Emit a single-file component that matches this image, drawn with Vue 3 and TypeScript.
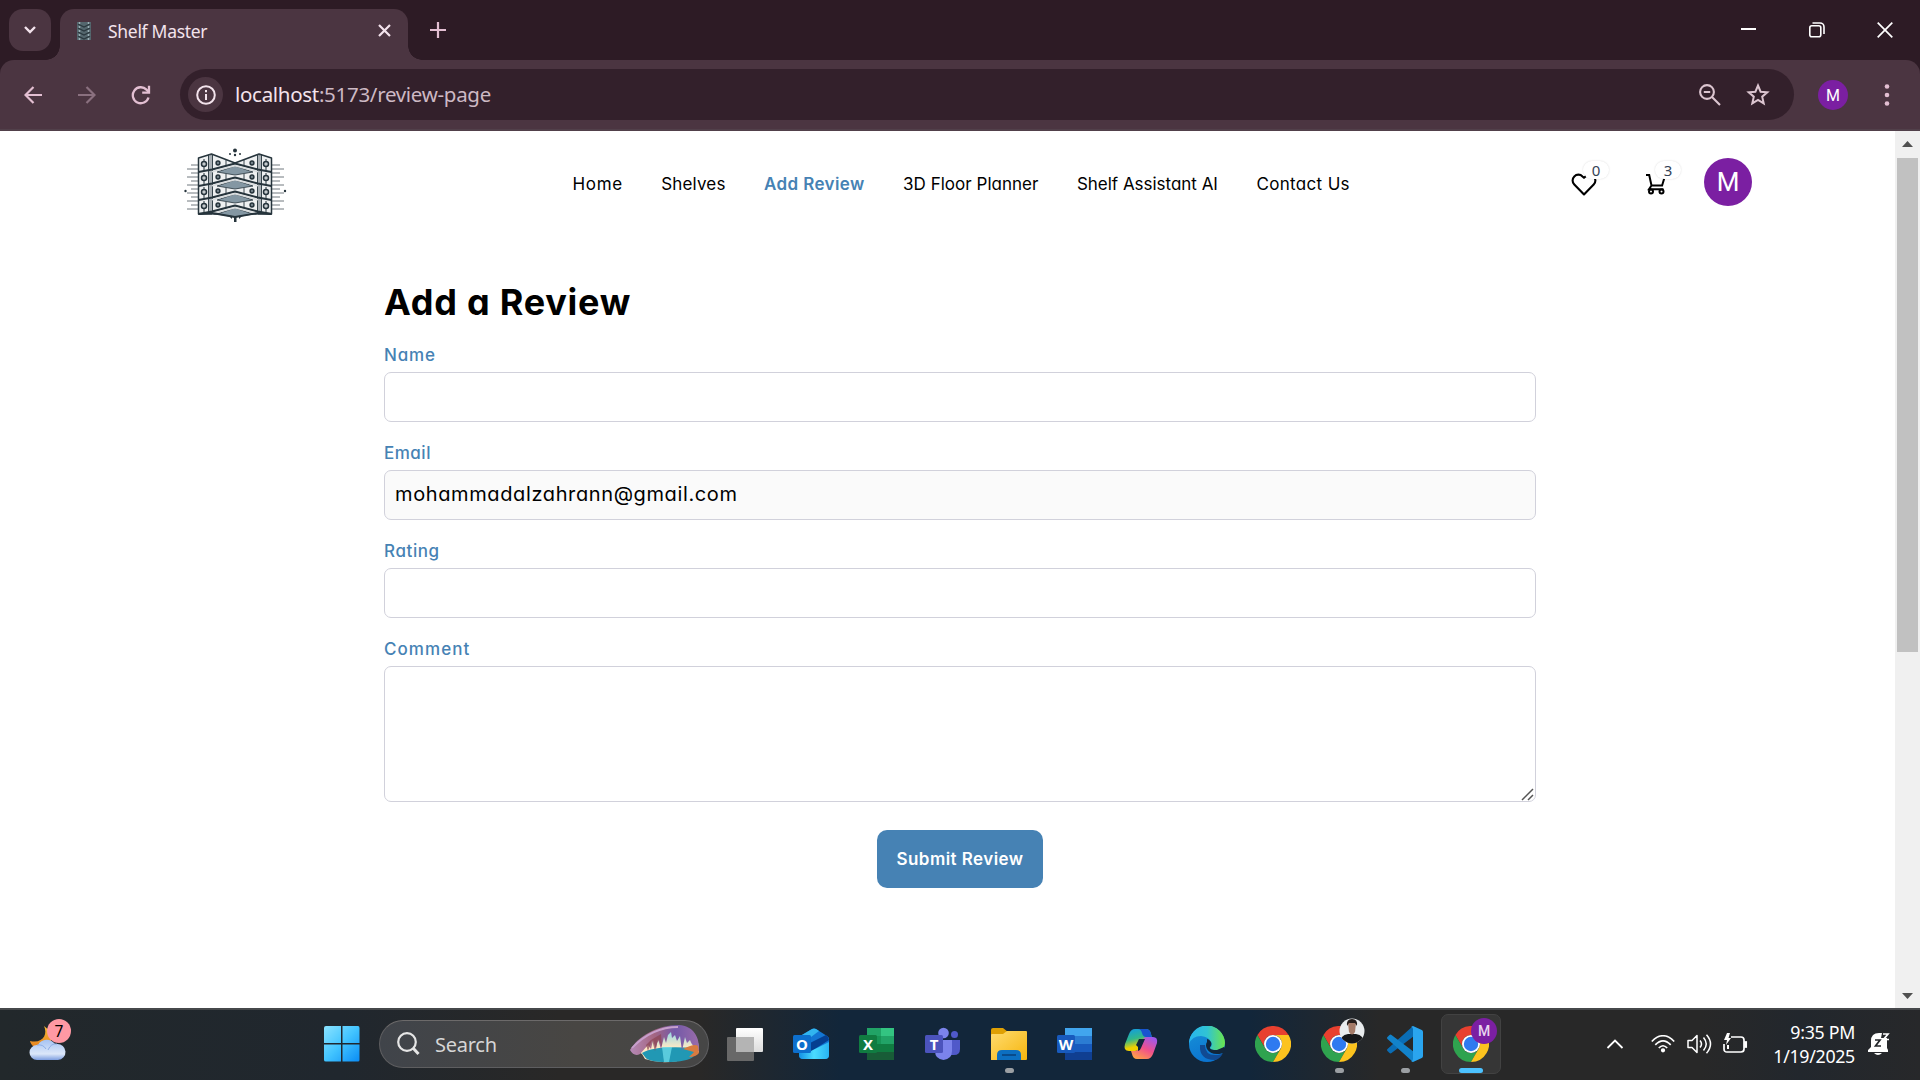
<script setup lang="ts">
interface NavItem { label: string; active?: boolean; spacing: string }
interface Field { label: string; value: string; readonly?: boolean; spacing: string }

const nav: NavItem[] = [
  { label: 'Home', spacing: '0.65px' },
  { label: 'Shelves', spacing: '0.16px' },
  { label: 'Add Review', active: true, spacing: '0.38px' },
  { label: '3D Floor Planner', spacing: '0.02px' },
  { label: 'Shelf Assistant AI', spacing: '-0.02px' },
  { label: 'Contact Us', spacing: '0.34px' },
]
const fields: Field[] = [
  { label: 'Name', value: '', spacing: '0.85px' },
  { label: 'Email', value: 'mohammadalzahrann@gmail.com', readonly: true, spacing: '0.5px' },
  { label: 'Rating', value: '', spacing: '0.6px' },
]
const shelfRows = [0, 14, 28, 42]
const sideLines = [0, 4, 8, 12, 16, 20, 24, 28, 32, 36, 40, 44]
</script>

<template>
  <div class="screen">
    <header class="titlebar">
      <div class="tab-search">
        <svg width="14" height="10" viewBox="0 0 14 10"><path d="M2 2l5 5 5-5" fill="none" stroke="#f3e3ec" stroke-width="2.4" /></svg>
      </div>
      <div class="tab">
        <svg class="favicon" width="14" height="20" viewBox="0 0 14 20">
          <rect x="0" y="1" width="14" height="18" fill="#54666d" />
          <path d="M1 3l6 3 6-3M1 7l6 3 6-3M1 11l6 3 6-3M1 15l6 3 6-3" stroke="#2b383e" stroke-width="1.300" fill="none" />
          <path d="M2.500 1v18M11.500 1v18" stroke="#9ab0b6" stroke-width="1.500" stroke-dasharray="2 2" />
        </svg>
        <span class="tab-title">Shelf Master</span>
        <svg class="tab-close" width="13" height="13" viewBox="0 0 13 13"><path d="M1 1l11 11M12 1L1 12" stroke="#f3e3ec" stroke-width="2.2" /></svg>
      </div>
      <svg class="plus" width="16" height="16" viewBox="0 0 16 16"><path d="M8 0v16M0 8h16" stroke="#e3bfd2" stroke-width="2.2" /></svg>
      <div class="window-controls">
        <svg width="16" height="16" viewBox="0 0 16 16"><path d="M0 7h15" stroke="#fff" stroke-width="2" /></svg>
        <svg width="16" height="16" viewBox="0 0 16 16" fill="none" stroke="#fff" stroke-width="1.600"><rect x=".8" y="3.800" width="11" height="11" rx="2" /><path d="M3.500 1h7.500a4 4 0 0 1 4 4v7" /></svg>
        <svg width="16" height="16" viewBox="0 0 16 16"><path d="M.7.7l14.600 14.600M15.300.7L.7 15.300" stroke="#fff" stroke-width="1.700" /></svg>
      </div>
    </header>

    <div class="toolbar">
      <svg class="back" width="18" height="18" viewBox="0 0 18 18" fill="none" stroke="#e3bfd2" stroke-width="2.200"><path d="M18 9H1.500M9.500 1L1.500 9l8 8" /></svg>
      <svg class="forward" width="18" height="18" viewBox="0 0 18 18" fill="none" stroke="#8a707f" stroke-width="2.200"><path d="M0 9h16.500M8.500 1l8 8-8 8" /></svg>
      <svg class="reload" width="20" height="20" viewBox="0 0 20 20" fill="none" stroke="#e3bfd2" stroke-width="2.300"><path d="M17.500 12.500A8 8 0 1 1 15.500 4.600L18 7.200" /><path d="M18 .8v6.800h-6.800" /></svg>
      <div class="omnibox">
        <span class="site-info">
          <svg width="20" height="20" viewBox="0 0 20 20"><circle cx="10" cy="10" r="8.800" fill="none" stroke="#f3e3ec" stroke-width="2" /><path d="M10 9v6M10 5v2.200" stroke="#f3e3ec" stroke-width="2" /></svg>
        </span>
        <span class="url"><b>localhost</b>:5173/review-page</span>
        <svg class="zoom" width="22" height="22" viewBox="0 0 22 22" fill="none" stroke="#dcc5d0" stroke-width="2.100"><circle cx="8" cy="8" r="6.900" /><path d="M13 13l8 8M4.800 8h6.400" /></svg>
        <svg class="star" width="24" height="23" viewBox="0 0 24 23" fill="none" stroke="#dcc5d0" stroke-width="2"><path d="M12 2.500l2.600 6.200 6.700.6-5.100 4.400 1.500 6.600-5.700-3.500-5.700 3.500 1.500-6.600-5.100-4.400 6.700-.6z" /></svg>
      </div>
      <span class="profile">M</span>
      <svg class="menu" width="6" height="24" viewBox="0 0 6 24" fill="#e3bfd2"><circle cx="3" cy="3.500" r="2.300" /><circle cx="3" cy="12" r="2.300" /><circle cx="3" cy="20.500" r="2.300" /></svg>
    </div>

    <div class="viewport">
      <div class="page">
        <div class="site-header">
          <svg class="logo" width="104" height="76" viewBox="0 0 104 76">
            <g stroke="#4b575e" stroke-width=".8">
              <path v-for="(y, i) in sideLines" :key="y" :d="`M${i % 2 ? 3 : 7} ${18 + y}H15M88 ${18 + y}h${i % 2 ? 12 : 8}`" />
            </g>
            <g fill="#26343c">
              <circle cx="51" cy="3.500" r="2" /><circle cx="46" cy="7" r="1" /><circle cx="51" cy="8" r="1.200" /><circle cx="56" cy="7" r="1" />
              <circle cx="1.500" cy="44" r="1.200" /><circle cx="101" cy="44" r="1.200" />
              <path d="M45 69h3v3zM50 69h2.500v6H50zM55 69h3l-3 3z" />
            </g>
            <g stroke="#26343c" stroke-width="1.500" stroke-linejoin="round">
              <path d="M14.500 11l13-4 23.500 9 24-9 12.500 4v56h-73z" fill="#eef0f1" />
              <path d="M24.500 8v58h4V7.500zM73.500 7.500V66h4V8z" fill="#aab1b6" stroke-width=".9" />
              <g v-for="y in shelfRows" :key="y">
                <path :d="`M33 ${25 + y}L51 ${19 + y}L69 ${25 + y}L51 ${28 + y}Z`" fill="#8497a3" stroke-width=".8" />
                <path :d="`M14.500 ${25 + y}L28 ${22.500 + y}L51 ${16.500 + y}L74 ${22.500 + y}L87.500 ${25 + y}`" fill="none" stroke-width="1.900" />
                <path :d="`M28 ${24.800 + y}L51 ${18.800 + y}L74 ${24.800 + y}`" fill="none" stroke="#d8dcde" stroke-width="1.400" />
                <path :d="`M42 ${13 + y}v5M60 ${13 + y}v5`" stroke-width=".9" />
                <circle cx="20" :cy="17 + y" r="2.500" fill="#c4cacd" />
                <circle cx="82" :cy="17 + y" r="2.500" fill="#c4cacd" />
                <circle cx="34" :cy="16 + y" r="1.900" fill="#78868e" />
                <circle cx="68" :cy="16 + y" r="1.900" fill="#78868e" />
                <path :d="`M20 ${12 + y}v2.500M20 ${19.500 + y}v4M82 ${12 + y}v2.500M82 ${19.500 + y}v4`" stroke-width="1" />
              </g>
              <path d="M14.500 67l13.500-1 23 4 23-4 13.500 1" fill="none" stroke-width="1.900" />
            </g>
          </svg>
          <nav class="nav">
            <a v-for="n in nav" :key="n.label" :class="{ active: n.active }" :style="{ letterSpacing: n.spacing }">{{ n.label }}</a>
          </nav>
          <div class="actions">
            <div class="action heart">
              <svg width="26" height="24" viewBox="0 0 26 24"><path d="M13 21.500L3.300 11.600a5.800 5.800 0 0 1 0-8.200 5.700 5.700 0 0 1 8.200 0L13 4.800l1.500-1.400a5.700 5.700 0 0 1 8.200 0 5.800 5.800 0 0 1 0 8.200z" fill="none" stroke="#000" stroke-width="2.100" stroke-linejoin="round" /></svg>
              <span class="badge">0</span>
            </div>
            <div class="action cart">
              <svg width="20" height="22" viewBox="0 0 20 22" fill="none" stroke="#000" stroke-width="2"><path d="M0 2h3.200l2.300 10.500h10.600L18.500 4.500M5.500 12.500L3 16.300h14.500" /><circle cx="5" cy="18.500" r="2" /><circle cx="15.500" cy="18.500" r="2" /></svg>
              <span class="badge">3</span>
            </div>
            <div class="avatar">M</div>
          </div>
        </div>

        <main class="review">
          <h1>Add a Review</h1>
          <div v-for="f in fields" :key="f.label" class="field">
            <label :style="{ letterSpacing: f.spacing }">{{ f.label }}</label>
            <div class="input" :class="{ readonly: f.readonly }"><span>{{ f.value }}</span></div>
          </div>
          <div class="field">
            <label class="wide">Comment</label>
            <div class="input area">
              <svg width="13" height="13" viewBox="0 0 13 13"><path d="M1 12L12 1M7 12l5-5" stroke="#555" stroke-width="1.500" /></svg>
            </div>
          </div>
          <button class="submit"><span>Submit Review</span></button>
        </main>
      </div>
      <div class="scrollbar">
        <svg width="11" height="6" viewBox="0 0 11 6"><path d="M0 6L5.500 0 11 6z" fill="#505050" /></svg>
        <div class="thumb"></div>
        <svg width="11" height="6" viewBox="0 0 11 6"><path d="M0 0l5.500 6L11 0z" fill="#505050" /></svg>
      </div>
    </div>

    <footer class="taskbar">
      <svg width="0" height="0" class="defs">
        <defs>
          <linearGradient id="win" x2="1" y2="1"><stop stop-color="#8be3ff" /><stop offset=".5" stop-color="#42c4ff" /><stop offset="1" stop-color="#0a8cf5" /></linearGradient>
          <linearGradient id="cloud" x2="0" y2="1"><stop stop-color="#a6c3f3" /><stop offset=".7" stop-color="#dce7f9" /><stop offset="1" stop-color="#7d9ee0" /></linearGradient>
          <linearGradient id="moon" x2="0" y2="1"><stop stop-color="#f7bd36" /><stop offset="1" stop-color="#e67f1d" /></linearGradient>
          <linearGradient id="glass" x2="0" y2="1"><stop stop-color="#fff" /><stop offset="1" stop-color="#dcdcdc" /></linearGradient>
          <linearGradient id="cave" x2="1" y2="0"><stop stop-color="#b58ab7" /><stop offset=".35" stop-color="#a46682" /><stop offset=".65" stop-color="#7359a8" /><stop offset="1" stop-color="#9a6caa" /></linearGradient>
          <linearGradient id="sky" x2="0" y2="1"><stop stop-color="#6cd1f1" /><stop offset=".6" stop-color="#ffe9c5" /></linearGradient>
          <linearGradient id="folder" x2="1" y2="1"><stop stop-color="#ffdc70" /><stop offset="1" stop-color="#f6b50d" /></linearGradient>
          <linearGradient id="copA" x2=".3" y2="1"><stop stop-color="#0f9ae8" /><stop offset=".5" stop-color="#31b88b" /><stop offset=".85" stop-color="#efd000" /></linearGradient>
          <linearGradient id="copB" x1=".8" x2=".2" y2="1"><stop stop-color="#9c58ee" /><stop offset=".5" stop-color="#f0508c" /><stop offset="1" stop-color="#ffa245" /></linearGradient>
          <linearGradient id="edgeA" x1="0" y1=".5" x2="1" y2=".5"><stop stop-color="#28b4ee" /><stop offset=".5" stop-color="#30c3d4" /><stop offset="1" stop-color="#6be54b" /></linearGradient>
          <linearGradient id="edgeB" x2=".4" y2="1"><stop stop-color="#1893d8" /><stop offset="1" stop-color="#0b74d0" /></linearGradient>
          <linearGradient id="olk" x2="1"><stop stop-color="#1391e5" /><stop offset=".5" stop-color="#4bdcff" /><stop offset="1" stop-color="#28b3f2" /></linearGradient>
        </defs>
        <symbol id="chrome" viewBox="0 0 48 48">
          <path d="M24 12h20.800A24 24 0 0 0 3.200 12l10.400 18A12 12 0 0 1 24 12z" fill="#e8402f" />
          <path d="M13.600 30L3.200 12A24 24 0 0 0 24 48l10.400-18a12 12 0 0 1-20.800 0z" fill="#2fa34f" />
          <path d="M34.400 30L24 48A24 24 0 0 0 44.800 12H24a12 12 0 0 1 10.400 18z" fill="#fcc31e" />
          <circle cx="24" cy="24" r="12" fill="#fff" /><circle cx="24" cy="24" r="9.600" fill="#2f7af0" />
        </symbol>
      </svg>

      <div class="weather">
        <svg width="38" height="36" viewBox="0 0 38 36">
          <path d="M15 0c4 8-1 18-14 15 1 4 4 7 9 7l12-6V6z" fill="url(#moon)" />
          <path d="M8 34a7.500 7.500 0 0 1 0-15h1a10 10 0 0 1 17-1h2a8 8 0 0 1 1 16z" fill="url(#cloud)" />
          <path d="M8 19q6-1 9 4M19 24q3-7 9-6" fill="none" stroke="#8eaee8" stroke-width="1" />
        </svg>
        <span class="count">7</span>
      </div>

      <svg class="start" width="36" height="36" viewBox="0 0 36 36" fill="url(#win)"><path d="M2 0h15v17H0V2Q0 0 2 0zM18.500 0H34q1.500 0 1.500 2v15h-17zM0 18.500h17v17H2Q0 35.500 0 34zM18.500 18.500h17V34q0 1.500-1.500 1.500H18.500z" /></svg>
      <div class="search">
        <svg class="glass" width="23" height="24" viewBox="0 0 23 24" fill="none" stroke="#e6e6e6"><circle cx="10" cy="10" r="8.800" stroke-width="2.200" /><path d="M16 16l5.500 6" stroke-width="3" /></svg>
        <span>Search</span>
        <svg class="cave" width="70" height="38" viewBox="0 0 70 38">
          <path d="M7 26C15 10 33 0 50 1c14 2 19 12 19 26L59 33Q35 41 15 34L12 29z" fill="url(#sky)" />
          <path d="M12 28Q24 20 66 23l-2 8Q58 37 36 37 18 37 15 32z" fill="#2198b4" />
          <path d="M32 22h10l-3 15h-5z" fill="#72e1ed" opacity=".7" />
          <path d="M0 25C8 12 26 0 49 0c14 1 21 11 20 27-4-5-7-6-9-12l-3 3-2-6-3 14-2-15-3 5-2-6-3 3-1-6-3 3-2 8-2-6-3 12-3-10-2 10-3-9-2 9-3-4-8 9Q4 32 0 25z" fill="url(#cave)" />
          <path d="M31 9l1 13-3-7-2 3-2 8-3-11-4 11-2-6 5-5z" fill="#8c4552" opacity=".7" />
          <path d="M53 24q12-6 15-3l1 7q-3 4-10 4l5-5z" fill="#d77b40" />
          <path d="M2 23Q22 2 48 2" fill="none" stroke="#c7a0cd" stroke-width="1.800" />
        </svg>
      </div>

      <div class="apps">
        <div class="app"><svg width="36" height="36" viewBox="0 0 36 36"><rect x="9" y="2" width="27" height="24" rx="1" fill="url(#glass)" /><rect x="0" y="11" width="27" height="24" rx="1" fill="#686868" /><rect x="9" y="11" width="18" height="15" fill="#b4b4b4" /></svg></div>
        <div class="app"><svg width="36" height="36" viewBox="0 0 36 36"><path d="M7 10L19 3q2-1 4 0l11 7q2 1 2 3v16q0 4-4 4H10q-4 0-4-4z" fill="#1376d3" /><path d="M9 9l10-6q2-1 4 0l3 2-16 12z" fill="#31b5ef" /><path d="M17 17L33 9q3 2 3 5L17 26z" fill="#053f91" /><path d="M6 19l10 7 20-10v13q0 4-4 4H10q-4 0-4-4z" fill="url(#olk)" /><rect y="9" width="18" height="18" rx="1.500" fill="#0d6fcd" /><text x="9" y="23.500" class="tile">O</text></svg></div>
        <div class="app"><svg width="36" height="36" viewBox="0 0 36 36"><path d="M8 2h14v8H8z" fill="#21a366" /><path d="M22 2h13v8H22z" fill="#33c481" /><path d="M8 10h14v8H8z" fill="#179556" /><path d="M22 10h13v8H22z" fill="#21a366" /><path d="M8 18h27v8H8z" fill="#107c41" /><path d="M8 26h27v8H8z" fill="#185c37" /><rect y="9" width="18" height="18" rx="1.500" fill="#107c41" /><text x="9" y="23.500" class="tile">X</text></svg></div>
        <div class="app"><svg width="36" height="36" viewBox="0 0 36 36"><circle cx="29.500" cy="8.500" r="3.500" fill="#5059c9" /><path d="M24 14h11v9q0 6-6 6h-5z" fill="#5059c9" /><circle cx="18.500" cy="7" r="5.300" fill="#7b83eb" /><path d="M10 14h17v11q0 8-8.500 9Q10 33 10 25z" fill="#7b83eb" /><rect y="9" width="18" height="18" rx="1.500" fill="#4b53bc" /><text x="9" y="23.500" class="tile">T</text></svg></div>
        <div class="app open"><svg width="36" height="36" viewBox="0 0 36 36"><path d="M0 4q0-2 2-2h10l5 4v6H0z" fill="#dfa004" /><path d="M0 9q0-1 1-1h11l4-3h19q1 0 1 1v27q0 1-1 1H0z" fill="url(#folder)" /><path d="M6 34v-5q0-5 5-5h14q5 0 5 5v5z" fill="#0c6fc1" /><path d="M11 29h14" stroke="#09437e" stroke-width="1.600" /></svg></div>
        <div class="app"><svg width="36" height="36" viewBox="0 0 36 36"><path d="M8 2h27v8H8z" fill="#41a5ee" /><path d="M8 10h27v8H8z" fill="#2b7cd3" /><path d="M8 18h27v8H8z" fill="#185abd" /><path d="M8 26h27v8H8z" fill="#103f91" /><rect y="9" width="18" height="18" rx="1.500" fill="#185abd" /><text x="9" y="23.500" class="tile">W</text></svg></div>
        <div class="app"><svg width="36" height="36" viewBox="0 0 36 36"><path d="M12 3h11q4 0 5 5l1 4h-7l-5 11q-2 2-5 2H6q-6 0-4-7L6 8q2-5 6-5z" fill="url(#copA)" /><path d="M15 3h8q4 0 5 5l1 3h-6q-3 0-4-4-1-4-4-4z" fill="#1854cf" /><path d="M24 33H14q-4 0-5-5l-1-3h4q3 0 5-4l3-8q1-2 4-2h6q5 0 4 6l-4 11q-2 5-6 5z" fill="url(#copB)" /><path d="M16 13h6l-4 9q-1 3-3 3 0-2 0-4l-2-2z" fill="#10263a" /></svg></div>
        <div class="app"><svg width="36" height="36" viewBox="0 0 36 36"><circle cx="18" cy="18" r="18" fill="url(#edgeB)" /><path d="M11 19Q10 34 26 34q5-1 8-7-2 2-8 2-10 0-10-10z" fill="#114a92" /><path d="M0 18A18 18 0 0 1 36 17q0 7-8 7-7 0-7-2 3-3 1-6-2-5-10-6Q3 10 0 18z" fill="url(#edgeA)" /><path d="M18 16q-2 3 0 7 3 5 10 5 5 0 7-2l2-3-2-2-7 3q-8 0-7-3 2-2 1-5-2-3-4-3z" fill="#12263a" /></svg></div>
        <div class="app"><svg width="36" height="36"><use href="#chrome" /></svg></div>
        <div class="app open">
          <svg width="36" height="36"><use href="#chrome" /></svg>
          <svg class="user" width="26" height="26" viewBox="0 0 26 26"><clipPath id="face"><circle cx="13" cy="13" r="12.500" /></clipPath><g clip-path="url(#face)"><rect width="26" height="26" fill="#e9ecee" /><path d="M1 26q0-9 8-10h8q8 1 8 10z" fill="#161719" /><path d="M9 5q4-5 8 0l-1 9q-3 5-6 0z" fill="#a57b68" /><path d="M8 8q-1-7 5-7t5 7l-2-3h-6z" fill="#251d1b" /></g></svg>
        </div>
        <div class="app open"><svg width="36" height="36" viewBox="0 0 36 36"><path d="M26 0l1 10L4.500 27q-1 .8-2 0L.5 25q-1-1 0-2z" fill="#0a6db5" /><path d="M26 36l1-10L4.500 9q-1-.8-2 0l-2 2q-1 1 0 2z" fill="#1283cb" /><path d="M26 0l8.800 4Q36 4.600 36 6v24q0 1.400-1.200 2L26 36l-2-1q2 0 2-2V3q0-2-2-2z" fill="#2aa5ef" /></svg></div>
        <div class="app current">
          <svg width="36" height="36"><use href="#chrome" /></svg>
          <span class="mini">M</span>
        </div>
      </div>

      <div class="tray">
        <svg class="chev" width="18" height="10" viewBox="0 0 18 10"><path d="M1.500 9L9 1.500 16.500 9" fill="none" stroke="#fff" stroke-width="1.800" /></svg>
        <svg class="wifi" width="24" height="18" viewBox="0 0 24 18" fill="none" stroke="#fff" stroke-width="1.700"><path d="M.8 6.500q11.200-11.500 22.400 0M4.300 9.800q7.700-8 15.400 0M7.800 13q4.200-4.500 8.400 0" /><circle cx="12" cy="15.300" r="1.300" fill="#fff" /></svg>
        <svg class="speaker" width="25" height="20" viewBox="0 0 25 20" fill="none" stroke="#fff" stroke-width="1.500"><path d="M1 6.500h4l5-5v17l-5-5H1z" stroke-linejoin="round" /><path d="M13 6.500q3 3.500 0 7M16.500 3.500q5.500 6.500 0 13M19.500.8q8 9.200 0 18.400" /></svg>
        <svg class="battery" width="25" height="22" viewBox="0 0 25 22" fill="none" stroke="#fff" stroke-width="1.700"><path d="M8 5h10q3 0 3 3v9q0 3-3 3H4q-3 0-3-3v-5" /><path d="M22 10h1.200v5H22z" fill="#fff" /><path d="M4 1L1 8h3l-1 5 5-7H5.500L7 1z" fill="#fff" stroke="none" /><path d="M5 13v4" stroke-width="2" /></svg>
        <div class="clock"><span>9:35 PM</span><span>1/19/2025</span></div>
        <svg class="bell" width="22" height="24" viewBox="0 0 22 24"><path d="M3 9q0-8 8-8h3l-1 5h6v10l1 2v2H0v-2l3-3zM6 21h8q-4 4-8 0z" fill="#fff" /><path d="M7 8h5l-4.500 6H13" fill="none" stroke="#24262a" stroke-width="1.700" /><path d="M15 2h5l-4.500 5.500H21" fill="none" stroke="#fff" stroke-width="1.700" /></svg>
      </div>
    </footer>
  </div>
</template>

<style>
body { margin: 0; overflow: hidden; }
</style>

<style scoped>
* { box-sizing: border-box; }
svg { display: block; flex: none; }
.screen { width: 1920px; height: 1080px; display: flex; flex-direction: column; overflow: hidden; background: #2d1b25; font-family: "Noto Sans", sans-serif; }
.titlebar { height: 60px; flex: none; display: flex; align-items: center; padding-left: 9px; background: #2d1b25; }
.tab-search { width: 42px; height: 42px; border-radius: 14px; background: #4b3541; display: flex; align-items: center; justify-content: center; }
.tab { position: relative; width: 348px; height: 51px; margin-left: 9px; align-self: flex-end; border-radius: 14px 14px 0 0; background: #4b3541; display: flex; align-items: center; padding: 0 17px 8px 17px; }
.tab::before, .tab::after { content: ""; position: absolute; bottom: 0; width: 14px; height: 14px; }
.tab::before { left: -14px; background: radial-gradient(circle at 0 0, transparent 13.5px, #4b3541 14px); }
.tab::after { right: -14px; background: radial-gradient(circle at 14px 0, transparent 13.5px, #4b3541 14px); }
.tab-title { margin-left: 17px; flex: 1; font-size: 17.5px; letter-spacing: -.3px; color: #f3e3ec; line-height: 24px; }
.plus { margin-left: 22px; }
.window-controls { margin-left: auto; display: flex; gap: 52px; padding-right: 27px; }
.toolbar { height: 71px; flex: none; display: flex; align-items: center; background: #4b3541; border-bottom: 2px solid #51404a; border-radius: 14px 14px 0 0; padding-left: 24px; }
.forward { margin-left: 36px; }
.reload { margin-left: 35px; }
.omnibox { width: 1614px; height: 51px; margin-left: 29px; border-radius: 26px; background: #33202b; display: flex; align-items: center; padding: 0 24px 0 8px; }
.site-info { width: 35px; height: 35px; border-radius: 50%; background: #4b3541; display: flex; align-items: center; justify-content: center; }
.url { margin-left: 12px; flex: 1; font-size: 20.5px; line-height: 30px; letter-spacing: -.3px; color: #cdb9c4; padding-bottom: 2px; }
.url b { font-weight: 400; color: #f3e3ec; }
.star { margin-left: 25px; }
.profile { width: 30px; height: 30px; margin-left: 24px; border-radius: 50%; background: #7b1fa2; color: #fff; font: 400 16px/31px Roboto, sans-serif; text-align: center; }
.menu { margin-left: 36px; }

.viewport { height: 877px; flex: none; display: flex; background: #fff; }
.page { flex: 1; font-family: Inter, sans-serif; font-feature-settings: "cv11"; color: #000; }
.site-header { height: 102px; display: flex; padding-left: 184px; }
.logo { margin-top: 16px; }
.nav { display: flex; align-items: center; gap: 38.5px; width: 780px; height: 106px; margin-left: 284.5px; white-space: nowrap; flex: none; }
.nav a { font-size: 17px; line-height: 24px; }
.nav .active { font-weight: 600; color: #4682b4; }
.actions { display: flex; margin-left: 218.5px; }
.action { position: relative; height: 26px; }
.heart { width: 75px; margin-top: 42px; }
.cart { width: 58px; margin-top: 42px; }
.badge { position: absolute; width: 26px; height: 18px; border-radius: 9px; background: #fff; box-shadow: 0 0 2px rgba(0,0,0,.15); font: 15px/18px "Noto Sans", sans-serif; color: #344256; text-align: center; }
.heart .badge { left: 12px; top: -12px; }
.cart .badge { left: 9px; top: -12px; }
.avatar { width: 48px; height: 48px; margin-top: 27px; border-radius: 50%; background: #7b1fa2; color: #fff; font: 26px/49px Roboto, sans-serif; text-align: center; }
.review { width: 1152px; margin-left: 384px; padding-top: 47px; display: flex; flex-direction: column; }
h1 { margin: 0 0 9px; height: 45px; font-size: 36px; line-height: 45px; font-weight: 700; letter-spacing: .75px; }
.field { display: flex; flex-direction: column; margin-bottom: 18px; }
.field label { height: 30px; padding-bottom: 4px; line-height: 26px; font-size: 17px; font-weight: 500; color: #4682b4; }
.field .wide { letter-spacing: 1.05px; }
.field:nth-of-type(1) label { height: 38px; padding-top: 8px; }
.input { height: 50px; border: 1px solid #d1d1db; border-radius: 7px; padding: 0 10px 2px; display: flex; align-items: center; background: #fff; font-size: 20px; letter-spacing: .62px; }
.input.readonly { background: #fafafa; }
.area { height: 136px; margin-bottom: 10px; align-items: flex-end; justify-content: flex-end; padding: 0 1px 0 0; }
.submit { width: 166px; height: 58px; align-self: center; border: 0; border-radius: 10px; background: #4682b4; color: #fff; font: 600 17px/58px Inter, sans-serif; letter-spacing: .45px; padding: 0; white-space: nowrap; }
.scrollbar { width: 25px; background: #f0f0f0; display: flex; flex-direction: column; align-items: center; padding: 10px 0 9px; }
.thumb { width: 21px; height: 494px; margin: 11px 0 auto; background: #c1c1c1; }

.taskbar { height: 72px; flex: none; display: flex; align-items: center; padding-bottom: 2px; border-top: 2px solid #46484b; background: linear-gradient(90deg, #22282b 0, #20272e 340px, #292827 560px, #292827 700px, #12263a 840px, #12263a 1250px, #282828 1380px, #282828 1700px, #22272d 1800px, #27282a 1920px); }
.defs { position: absolute; }
.weather { position: relative; width: 40px; height: 36px; margin-left: 29px; }
.count { position: absolute; left: 18px; top: -7px; width: 24px; height: 24px; border-radius: 50%; background: #ff99a4; color: #000; font-size: 15.500px; line-height: 24px; text-align: center; }
.start { margin-left: 255px; }
.search { width: 330px; height: 48px; margin-left: 19px; border: 1.500px solid #5e5e60; border-top-color: #6c6a6a; border-radius: 24px; background: linear-gradient(90deg, #40444a, #484643 60%, #464646); display: flex; align-items: center; padding: 0 8px 0 17px; color: #d6d6d6; font-size: 20px; }
.search span { margin-left: 15px; flex: 1; letter-spacing: -.25px; }
.apps { display: flex; margin-left: 3px; }
.app { position: relative; width: 66px; height: 60px; display: flex; align-items: center; justify-content: center; }
.open::after { content: ""; position: absolute; bottom: 1px; left: 29px; width: 9px; height: 5px; border-radius: 3px; background: #9b9fa3; }
.current::before { content: ""; position: absolute; inset: 0 3px; border: 1px solid #424242; border-radius: 7px; background: #363636; }
.current svg { position: relative; }
.current::after { content: ""; position: absolute; bottom: 1px; left: 21px; width: 24px; height: 5px; border-radius: 3px; background: #4cc2ff; }
.tile { fill: #fff; font: 700 15px "Noto Sans", sans-serif; text-anchor: middle; }
.user { position: absolute; left: 33px; top: 4px; }
.mini { position: absolute; left: 33px; top: 4px; width: 26px; height: 26px; border-radius: 50%; background: #7b1fa2; color: #e8d4ee; font: 500 14px/26px Roboto, sans-serif; text-align: center; }
.tray { display: flex; align-items: center; margin-left: 102px; }
.wifi { margin-left: 27px; }
.speaker { margin-left: 12px; }
.battery { margin-left: 11px; margin-top: -3px; }
.clock { width: 107px; display: flex; flex-direction: column; align-items: flex-end; color: #fff; font-size: 17.8px; line-height: 24px; letter-spacing: -.3px; }
.bell { margin-left: 13px; }
</style>
